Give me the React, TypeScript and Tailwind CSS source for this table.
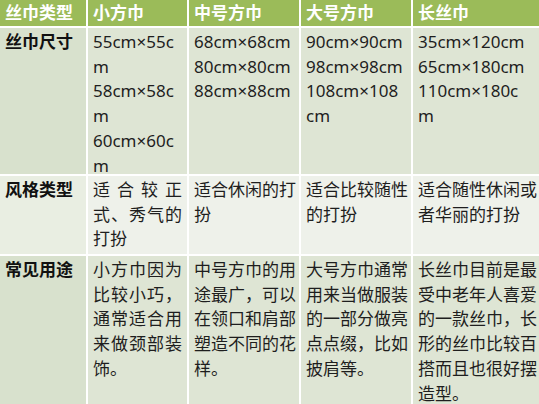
import React from "react";

const font = { fontFamily: '"Noto Sans", "Noto Sans CJK SC", sans-serif' };

type CellProps = { lines: string[]; justify?: boolean; bold?: boolean };

function Lines({ lines, justify }: CellProps) {
  return (
    <>
      {lines.map((l, i) => (
        <div
          key={i}
          className={
            justify && i < lines.length - 1
              ? "whitespace-nowrap text-justify [text-align-last:justify]"
              : "whitespace-nowrap"
          }
        >
          {l}
        </div>
      ))}
    </>
  );
}

export default function App() {
  const head = ["丝巾类型", "小方巾", "中号方巾", "大号方巾", "长丝巾"];
  const rows: { label: string; bg: string; first: string; cells: string[][] }[] = [
    {
      label: "丝巾尺寸",
      bg: "bg-[#dee5d4]",
      first: "bg-[#d8e1cd]",
      cells: [
        ["55cm×55c", "m", "58cm×58c", "m", "60cm×60c", "m"],
        ["68cm×68cm", "80cm×80cm", "88cm×88cm"],
        ["90cm×90cm", "98cm×98cm", "108cm×108", "cm"],
        ["35cm×120cm", "65cm×180cm", "110cm×180c", "m"],
      ],
    },
    {
      label: "风格类型",
      bg: "bg-[#eef1ea]",
      first: "bg-[#e9eee2]",
      cells: [
        ["适合较正", "式、秀气的", "打扮"],
        ["适合休闲的打", "扮"],
        ["适合比较随性", "的打扮"],
        ["适合随性休闲或", "者华丽的打扮"],
      ],
    },
    {
      label: "常见用途",
      bg: "bg-[#dee5d4]",
      first: "bg-[#d8e1cd]",
      cells: [
        ["小方巾因为", "比较小巧，", "通常适合用", "来做颈部装", "饰。"],
        ["中号方巾的用", "途最广，可以", "在领口和肩部", "塑造不同的花", "样。"],
        ["大号方巾通常", "用来当做服装", "的一部分做亮", "点点缀，比如", "披肩等。"],
        ["长丝巾目前是最", "受中老年人喜爱", "的一款丝巾，长", "形的丝巾比较百", "搭而且也很好摆", "造型。"],
      ],
    },
  ];

  return (
    <div className="w-[539px] h-[404px] overflow-hidden bg-white" style={font}>
      <div className="grid grid-cols-[86px_99px_110px_110px_1fr] grid-rows-[26px_146px_78px_152px] gap-[2px] bg-white text-[17px] leading-[24.7px] text-[#1e1e1e]">
        {head.map((h, i) => (
          <div
            key={i}
            className="bg-[#9bbb59] px-[5px] flex items-center font-bold text-white"
          >
            {h}
          </div>
        ))}
        {rows.map((r, ri) => (
          <React.Fragment key={ri}>
            <div className={`${r.first} px-[5px] pt-[2px] font-bold text-[#111]`}>
              {r.label}
            </div>
            {r.cells.map((c, ci) => (
              <div key={ci} className={`${r.bg} px-[5px] pt-[2px]`}>
                <Lines lines={c} justify={ci === 0} />
              </div>
            ))}
          </React.Fragment>
        ))}
      </div>
    </div>
  );
}
